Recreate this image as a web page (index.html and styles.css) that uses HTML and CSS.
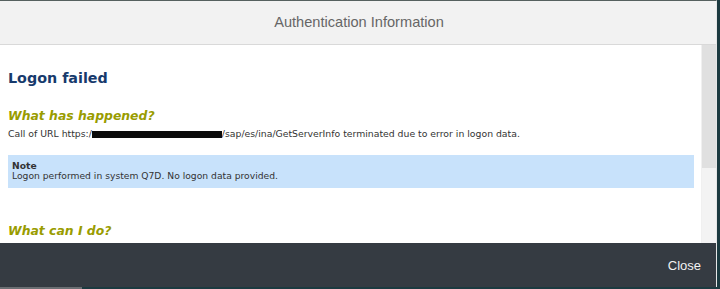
FILE: index.html
```html
<!DOCTYPE html>
<html lang="en">
<head>
<meta charset="utf-8">
<title>Authentication Information</title>
<link rel="stylesheet" href="styles.css">
</head>
<body>
<div class="dialog">
  <header class="dlg-header">Authentication Information</header>
  <div class="dlg-body">
    <div class="content">
      <h1 class="title">Logon failed</h1>
      <h2 class="section">What has happened?</h2>
      <p class="text">Call of URL https:/<span class="redact"></span>/sap/es/ina/GetServerInfo terminated due to error in logon data.</p>
      <div class="note">
        <div class="note-head">Note</div>
        <div class="note-text">Logon performed in system Q7D. No logon data provided.</div>
      </div>
      <h2 class="section section-2">What can I do?</h2>
    </div>
    <div class="scrollbar"><div class="thumb"></div><div class="track"></div></div>
  </div>
  <footer class="dlg-footer"><span class="close">Close</span></footer>
</div>
<div class="taskstrip"><div class="taskstrip-item"></div></div>
</body>
</html>
```
FILE: styles.css
```css
html, body {
  margin: 0;
  padding: 0;
}
body {
  width: 720px;
  height: 289px;
  background: #1c3a40;
  overflow: hidden;
  display: flex;
  flex-direction: column;
}
.dialog {
  width: 716px;
  border-right: 1px solid #e6e6e6;
  border-top: 1px solid #56615f;
  display: flex;
  flex-direction: column;
  background: #fff;
}
.dlg-header {
  height: 43px;
  border-bottom: 1px solid #d9d9d9;
  background: #f2f2f2;
  display: flex;
  align-items: center;
  justify-content: center;
  font-family: "Liberation Sans", Arial, sans-serif;
  font-size: 14.6px;
  line-height: 17px;
  color: #666;
  padding-left: 2px;
}
.dlg-body {
  height: 198px;
  display: flex;
  overflow: hidden;
}
.content {
  flex: 1;
  padding-left: 8px;
  padding-right: 7px;
  font-family: "DejaVu Sans", Verdana, sans-serif;
  overflow: hidden;
}
.title {
  margin: 23.5px 0 0;
  font-size: 14.3px;
  line-height: 18px;
  font-weight: bold;
  color: #173a6c;
}
.section {
  margin: 21.5px 0 0;
  font-size: 12.4px;
  line-height: 15px;
  font-weight: bold;
  font-style: italic;
  color: #999c00;
}
.section-2 {
  margin-top: 35px;
}
.text {
  margin: 4.5px 0 0;
  font-size: 9.3px;
  line-height: 12px;
  color: #333;
}
.redact {
  display: inline-block;
  width: 130px;
  height: 7px;
  background: #0a0a0a;
  vertical-align: -1px;
}
.note {
  margin-top: 15.5px;
  padding: 5.5px 4px 6.5px;
  background: #c8e2fb;
  font-size: 9.2px;
  line-height: 10.5px;
  color: #333;
}
.note-head {
  font-weight: bold;
}
.scrollbar {
  width: 14px;
  display: flex;
  flex-direction: column;
  background: #f3f3f3;
  border-left: 1px solid #f0f0f0;
}
.thumb {
  height: 123px;
  background: #e0e0e0;
}
.track {
  flex: 1;
}
.dlg-footer {
  height: 44px;
  background: #353b42;
  display: flex;
  align-items: center;
  justify-content: flex-end;
  padding-right: 15px;
  font-family: "Liberation Sans", Arial, sans-serif;
  font-size: 13px;
  line-height: 15px;
  color: #f2f2f2;
}
.taskstrip {
  height: 2px;
  display: flex;
}
.taskstrip-item {
  width: 82px;
  background: #6b6f73;
}
```
